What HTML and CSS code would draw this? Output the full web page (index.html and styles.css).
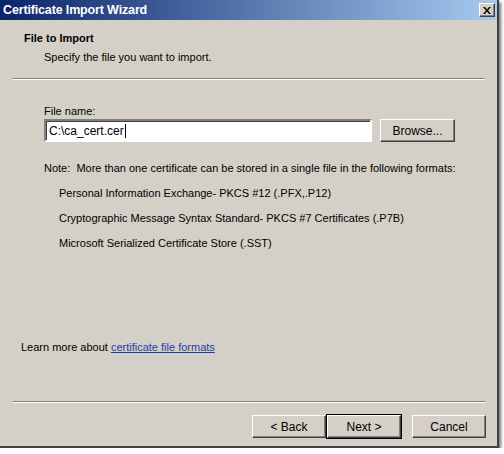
FILE: index.html
```html
<!DOCTYPE html>
<html>
<head>
<meta charset="utf-8">
<link rel="stylesheet" href="styles.css">
</head>
<body>
<div class="window">
  <div class="titlebar">
    <span class="title">Certificate Import Wizard</span>
    <span class="close"><svg width="8" height="7" viewBox="0 0 8 7"><path d="M0 0h2l2 2.5L6 0h2L5 3.5 8 7H6L4 4.5 2 7H0l3-3.5z" fill="#000"/></svg></span>
  </div>
  <div class="header">
    <div class="h-title">File to Import</div>
    <div class="h-sub">Specify the file you want to import.</div>
  </div>
  <div class="sep"></div>
  <div class="body">
    <div class="label">File name:</div>
    <div class="file-row">
      <div class="input">C:\ca_cert.cer<span class="caret"></span></div>
      <div class="btn browse">Browse...</div>
    </div>
    <div class="note">Note:&nbsp; More than one certificate can be stored in a single file in the following formats:</div>
    <ul class="formats">
      <li>Personal Information Exchange- PKCS #12 (.PFX,.P12)</li>
      <li>Cryptographic Message Syntax Standard- PKCS #7 Certificates (.P7B)</li>
      <li>Microsoft Serialized Certificate Store (.SST)</li>
    </ul>
  </div>
  <div class="learn">Learn more about <a class="link">certificate file formats</a></div>
  <div class="sep"></div>
  <div class="footer">
    <div class="btn nav">&lt; Back</div>
    <div class="btn nav default">Next &gt;</div>
    <div class="btn nav cancel">Cancel</div>
  </div>
</div>
</body>
</html>
```
FILE: styles.css
```css
html, body {
  margin: 0;
  padding: 0;
  background: #ffffff;
}
body {
  font-family: "Liberation Sans", Arial, sans-serif;
  font-size: 11px;
  line-height: 14px;
  color: #000;
}
.window {
  width: 497px;
  height: 446px;
  background: #d4d0c8;
  border-right: 2px solid #404040;
  border-bottom: 2px solid #404040;
  box-shadow: 2px 2px 3px rgba(0,0,0,0.55);
  display: flex;
  flex-direction: column;
}
.titlebar {
  height: 20px;
  background: linear-gradient(to right, #0a246a, #a6caf0);
  display: flex;
  align-items: center;
  justify-content: space-between;
  padding: 0 2px 0 3px;
}
.title {
  color: #fff;
  font-weight: bold;
  font-size: 12.5px;
  letter-spacing: -0.15px;
}
.close {
  width: 14px;
  height: 12px;
  background: #d4d0c8;
  border: 1px solid;
  border-color: #fff #404040 #404040 #fff;
  box-shadow: inset -1px -1px 0 #808080;
  display: flex;
  align-items: center;
  justify-content: center;
}
.header {
  padding: 11px 0 0 24px;
  height: 58px;
  box-sizing: border-box;
}
.h-title {
  font-weight: bold;
}
.h-sub {
  margin: 5px 0 0 20px;
}
.sep {
  margin: 0 12px 0 13px;
  height: 1px;
  background: #808080;
  border-bottom: 1px solid #fff;
}
.body {
  padding: 24px 0 0 44px;
  height: 260px;
  box-sizing: border-box;
}
.file-row {
  display: flex;
  margin-top: 1px;
  gap: 8px;
}
.input {
  width: 321px;
  height: 19px;
  background: #fff;
  border: 2px solid;
  border-color: #808080 #fff #fff #808080;
  box-shadow: inset 1px 1px 0 #404040;
  padding-left: 3px;
  display: flex;
  align-items: center;
  font-size: 12px;
}
.caret {
  display: inline-block;
  width: 1px;
  height: 14px;
  background: #000;
  margin-left: 1px;
}
.btn {
  background: #d4d0c8;
  border: 1px solid;
  border-color: #fff #404040 #404040 #fff;
  box-shadow: inset -1px -1px 0 #808080;
  display: flex;
  align-items: center;
  justify-content: center;
  box-sizing: border-box;
  font-size: 12px;
}
.browse {
  width: 75px;
  height: 23px;
}
.note {
  margin-top: 19px;
}
.formats {
  list-style: none;
  margin: 0;
  padding: 0 0 0 15px;
}
.formats li {
  margin-top: 11px;
}
.learn {
  padding: 0 0 0 21px;
  height: 61px;
  box-sizing: border-box;
}
.link {
  color: #1c3ea8;
  text-decoration: underline;
}
.footer {
  display: flex;
  justify-content: flex-end;
  padding: 12px 11px 0 0;
}
.nav {
  width: 74px;
  height: 23px;
}
.default {
  outline: 1px solid #000;
  margin-left: 1px;
}
.cancel {
  margin-left: 11px;
}
```
